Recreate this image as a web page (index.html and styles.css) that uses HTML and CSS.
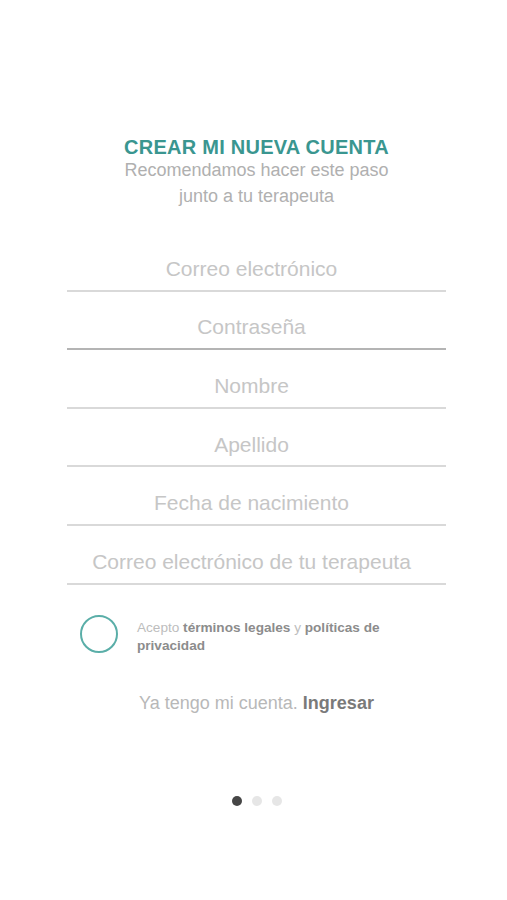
FILE: index.html
```html
<!DOCTYPE html>
<html lang="es">
<head>
    <meta charset="UTF-8">
    <meta name="viewport" content="width=device-width, initial-scale=1.0">
    <title>Crear mi nueva cuenta</title>
    <link rel="stylesheet" href="styles.css">
</head>
<body>

    <div class="screen">
        <div class="header">
            <h1>CREAR MI NUEVA CUENTA</h1>
            <p>Recomendamos hacer este paso<br>junto a tu terapeuta</p>
        </div>

        <div class="form">
            <input type="text" class="field" placeholder="Correo electrónico">
            <input type="password" class="field dark" placeholder="Contraseña">
            <input type="text" class="field" placeholder="Nombre">
            <input type="text" class="field" placeholder="Apellido">
            <input type="text" class="field" placeholder="Fecha de nacimiento">
            <input type="text" class="field" placeholder="Correo electrónico de tu terapeuta">
        </div>

        <label class="terms">
            <span class="check"></span>
            <span class="terms-text">Acepto <b>términos legales</b> y <b>políticas de privacidad</b></span>
        </label>

        <p class="login">Ya tengo mi cuenta. <b>Ingresar</b></p>

        <div class="dots">
            <span class="dot active"></span>
            <span class="dot"></span>
            <span class="dot"></span>
        </div>
    </div>

</body>
</html>
```

FILE: styles.css
```css
body {
    margin: 0;
    font-family: "Liberation Sans", Arial, sans-serif;
    background-color: #fff;
}

.screen {
    display: flex;
    flex-direction: column;
    align-items: center;
    width: 507px;
    height: 900px;
    padding-top: 137px;
    padding-left: 6px;
    box-sizing: border-box;
}

.header {
    text-align: center;
}

.header h1 {
    margin: 0;
    font-size: 20px;
    line-height: 20px;
    font-weight: bold;
    color: #3a9690;
    letter-spacing: 0.25px;
}

.header p {
    margin: 0;
    font-size: 18px;
    line-height: 26px;
    color: #b0b0b0;
}

.form {
    display: flex;
    flex-direction: column;
    width: 379px;
    margin-top: 24px;
}

.field {
    height: 58.6px;
    box-sizing: border-box;
    padding: 15px 10px 0 0;
    border: none;
    border-bottom: 2px solid #d9d9d9;
    font-family: inherit;
    font-size: 21px;
    text-align: center;
    background: none;
    outline: none;
}

.field::placeholder {
    color: #c6c6c6;
}

.field.dark {
    border-bottom-color: #b4b4b4;
}

.terms {
    display: flex;
    align-items: flex-start;
    gap: 19px;
    width: 379px;
    margin-top: 30px;
    padding-left: 13px;
    box-sizing: border-box;
}

.check {
    flex: none;
    width: 38px;
    height: 38px;
    border: 2px solid #5aaea8;
    border-radius: 50%;
    box-sizing: border-box;
}

.terms-text {
    width: 262px;
    padding-top: 4px;
    font-size: 13.6px;
    line-height: 18px;
    color: #bdbdbd;
}

.terms-text b {
    color: #8c8c8c;
}

.login {
    margin: 37px 0 0;
    font-size: 18px;
    line-height: 22px;
    color: #b8b8b8;
}

.login b {
    color: #7a7a7a;
}

.dots {
    display: flex;
    gap: 10px;
    margin-top: 82px;
}

.dot {
    width: 10px;
    height: 10px;
    border-radius: 50%;
    background-color: #e6e6e6;
}

.dot.active {
    background-color: #464646;
}
```
